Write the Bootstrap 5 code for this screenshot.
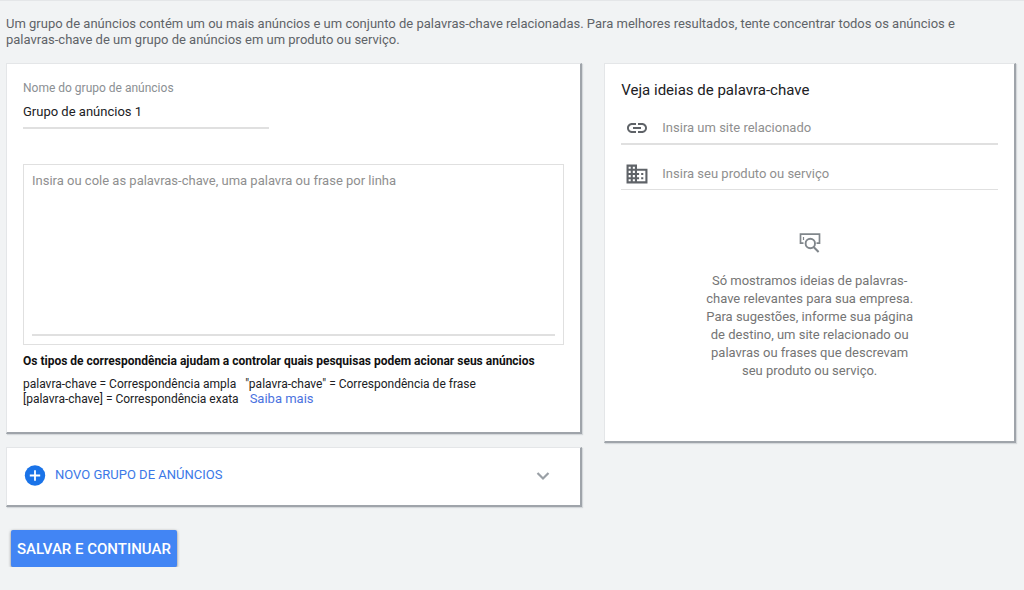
<!DOCTYPE html>
<html lang="pt-BR">
<head>
<meta charset="utf-8">
<meta name="viewport" content="width=device-width, initial-scale=1">
<title>Grupos de anúncios</title>
<link href="https://cdn.jsdelivr.net/npm/bootstrap@5.3.0/dist/css/bootstrap.min.css" rel="stylesheet">
<style>
  body { background: #f1f3f4; color: #202124; font: 400 13px/16px Roboto, sans-serif; }
  .page { border-top: 1px solid #e4e6e8; padding: 15px 8px 0 6px; }
  .intro { color: #5f6368; margin-bottom: 15px; padding-right: 32px; }
  .columns { display: grid; grid-template-columns: 7fr 5fr; gap: 22px; align-items: start; }
  .panel { background: #fff; border: 1px solid #e4e6e8; border-right: 2px solid #9fa4aa; border-bottom: 2px solid #9fa4aa; box-shadow: 1px 1px 1px #d5d8db; }
  .group-panel { padding: 16px 16px 25px; }
  .ideas-panel { padding: 16px 16px 61px; }
  .field-label { color: #8b8f93; font-size: 12px; }
  .line-input, .line-input:focus { border: 0; border-bottom: 2px solid #e0e0e0; border-radius: 0; padding: 0; font-size: 13px; line-height: 16px; color: #202124; background: transparent; }
  .name-input, .name-input:focus { width: 246px; height: 33px; padding-bottom: 1px; }
  .form-control::placeholder { color: #8f8f8f; opacity: 1; }
  .keyword-box { border: 1px solid #e0e0e0; padding: 8px; margin-top: 35px; }
  .keyword-box textarea { height: 163px; resize: none; }
  .match-title { font-size: 12px; line-height: 16px; font-weight: 700; margin: 8px 0; color: #111; }
  .match-types { font-size: 12px; line-height: 15px; }
  .match-types a { font-size: 13px; line-height: 12px; margin-left: 8px; }
  a { color: #4a72e0; text-decoration: none; }
  .ideas-title { font-size: 15px; line-height: 20px; font-weight: 400; margin: 0 0 11px; }
  .idea-field { border-bottom: 2px solid #e0e0e0; height: 34px; gap: 14px; padding: 2px 0 0 5px; }
  .idea-field + .idea-field { border-bottom-width: 1px; height: 45px; padding-top: 13px; }
  .idea-field .line-input { border: 0; }
  .hint-block { padding-top: 40px; }
  .hint { width: 220px; line-height: 18px; color: #757575; margin: 18px auto 0; }
  .new-group { border-radius: 0; padding: 12px 25px 16px 16px; font-size: 13px; line-height: 24px; color: #3b78e7; margin-top: 13px; height: 60px; }
  .new-group:hover { background: #fff; }
  .save { background: #4285f4; color: #fff; font-size: 15px; line-height: 20px; font-weight: 500; border: 0; border-radius: 2px; padding: 9px 6px 8px; margin: 23px 0 0 5px; box-shadow: 0 1px 3px #777; }
</style>
</head>
<body>
<main class="page">
  <p class="intro">Um grupo de anúncios contém um ou mais anúncios e um conjunto de palavras-chave relacionadas. Para melhores resultados, tente concentrar todos os anúncios e palavras-chave de um grupo de anúncios em um produto ou serviço.</p>
  <div class="columns">
    <div>
      <section class="panel group-panel">
        <label class="field-label d-block" for="groupName">Nome do grupo de anúncios</label>
        <input class="form-control line-input name-input" id="groupName" type="text" value="Grupo de anúncios 1">
        <div class="keyword-box">
          <textarea class="form-control line-input d-block" aria-label="Palavras-chave" placeholder="Insira ou cole as palavras-chave, uma palavra ou frase por linha"></textarea>
        </div>
        <h2 class="match-title">Os tipos de correspondência ajudam a controlar quais pesquisas podem acionar seus anúncios</h2>
        <p class="match-types mb-0">palavra-chave = Correspondência ampla &nbsp;&nbsp;"palavra-chave" = Correspondência de frase<br>[palavra-chave] = Correspondência exata <a href="#">Saiba mais</a></p>
      </section>
      <button type="button" class="btn panel new-group w-100 d-flex align-items-center">
        <svg width="24" height="24" viewBox="0 0 24 24" class="me-2" aria-hidden="true"><circle cx="12" cy="12.500" r="10.2" fill="#1a73e8"/><path d="M12 7.300v10.4M6.8 12.500h10.4" stroke="#fff" stroke-width="1.8"/></svg>
        NOVO GRUPO DE ANÚNCIOS
        <svg width="24" height="24" viewBox="0 0 24 24" class="ms-auto" aria-hidden="true"><path d="M6.5 10l5.5 5.5 5.5-5.5" fill="none" stroke="#9aa0a6" stroke-width="2.2"/></svg>
      </button>
    </div>
    <section class="panel ideas-panel">
      <h2 class="ideas-title">Veja ideias de palavra-chave</h2>
      <div class="idea-field d-flex align-items-center">
        <svg width="22" height="22" viewBox="1 1 22 22" class="flex-shrink-0" aria-hidden="true"><path fill="#5f6368" d="M3.9 12c0-1.71 1.39-3.1 3.1-3.1h4V7H7c-2.76 0-5 2.24-5 5s2.24 5 5 5h4v-1.9H7c-1.71 0-3.1-1.39-3.1-3.1zM8 13h8v-2H8v2zm9-6h-4v1.9h4c1.71 0 3.1 1.39 3.1 3.1s-1.39 3.1-3.1 3.1h-4V17h4c2.76 0 5-2.24 5-5s-2.24-5-5-5z"/></svg>
        <input class="form-control line-input" type="text" aria-label="Site relacionado" placeholder="Insira um site relacionado">
      </div>
      <div class="idea-field d-flex align-items-center">
        <svg width="22" height="22" viewBox="1.500 1.500 21 21" class="flex-shrink-0" aria-hidden="true"><path fill="#5f6368" d="M12 7V3H2v18h20V7H12zM6 19H4v-2h2v2zm0-4H4v-2h2v2zm0-4H4V9h2v2zm0-4H4V5h2v2zm4 12H8v-2h2v2zm0-4H8v-2h2v2zm0-4H8V9h2v2zm0-4H8V5h2v2zm10 12h-8v-2h2v-2h-2v-2h2v-2h-2V9h8v10zm-2-8h-2v2h2v-2zm0 4h-2v2h2v-2z"/></svg>
        <input class="form-control line-input" type="text" aria-label="Produto ou serviço" placeholder="Insira seu produto ou serviço">
      </div>
      <div class="text-center hint-block">
        <svg class="d-block mx-auto" width="24" height="24" viewBox="0 0 24 24" fill="none" stroke="#80868b" aria-hidden="true"><path d="M5.500 13.200H2.500V4.200h19v9h-3" stroke-width="1.700"/><path d="M5.500 7v3" stroke-width="1.200"/><circle cx="12.300" cy="13.500" r="4.700" stroke-width="1.900"/><path d="M15.600 17l5 5" stroke-width="2"/></svg>
        <p class="hint">Só mostramos ideias de palavras-chave relevantes para sua empresa. Para sugestões, informe sua página de destino, um site relacionado ou palavras ou frases que descrevam seu produto ou serviço.</p>
      </div>
    </section>
  </div>
  <button type="button" class="btn save">SALVAR E CONTINUAR</button>
</main>
<script src="https://cdn.jsdelivr.net/npm/bootstrap@5.3.0/dist/js/bootstrap.bundle.min.js"></script>
</body>
</html>
